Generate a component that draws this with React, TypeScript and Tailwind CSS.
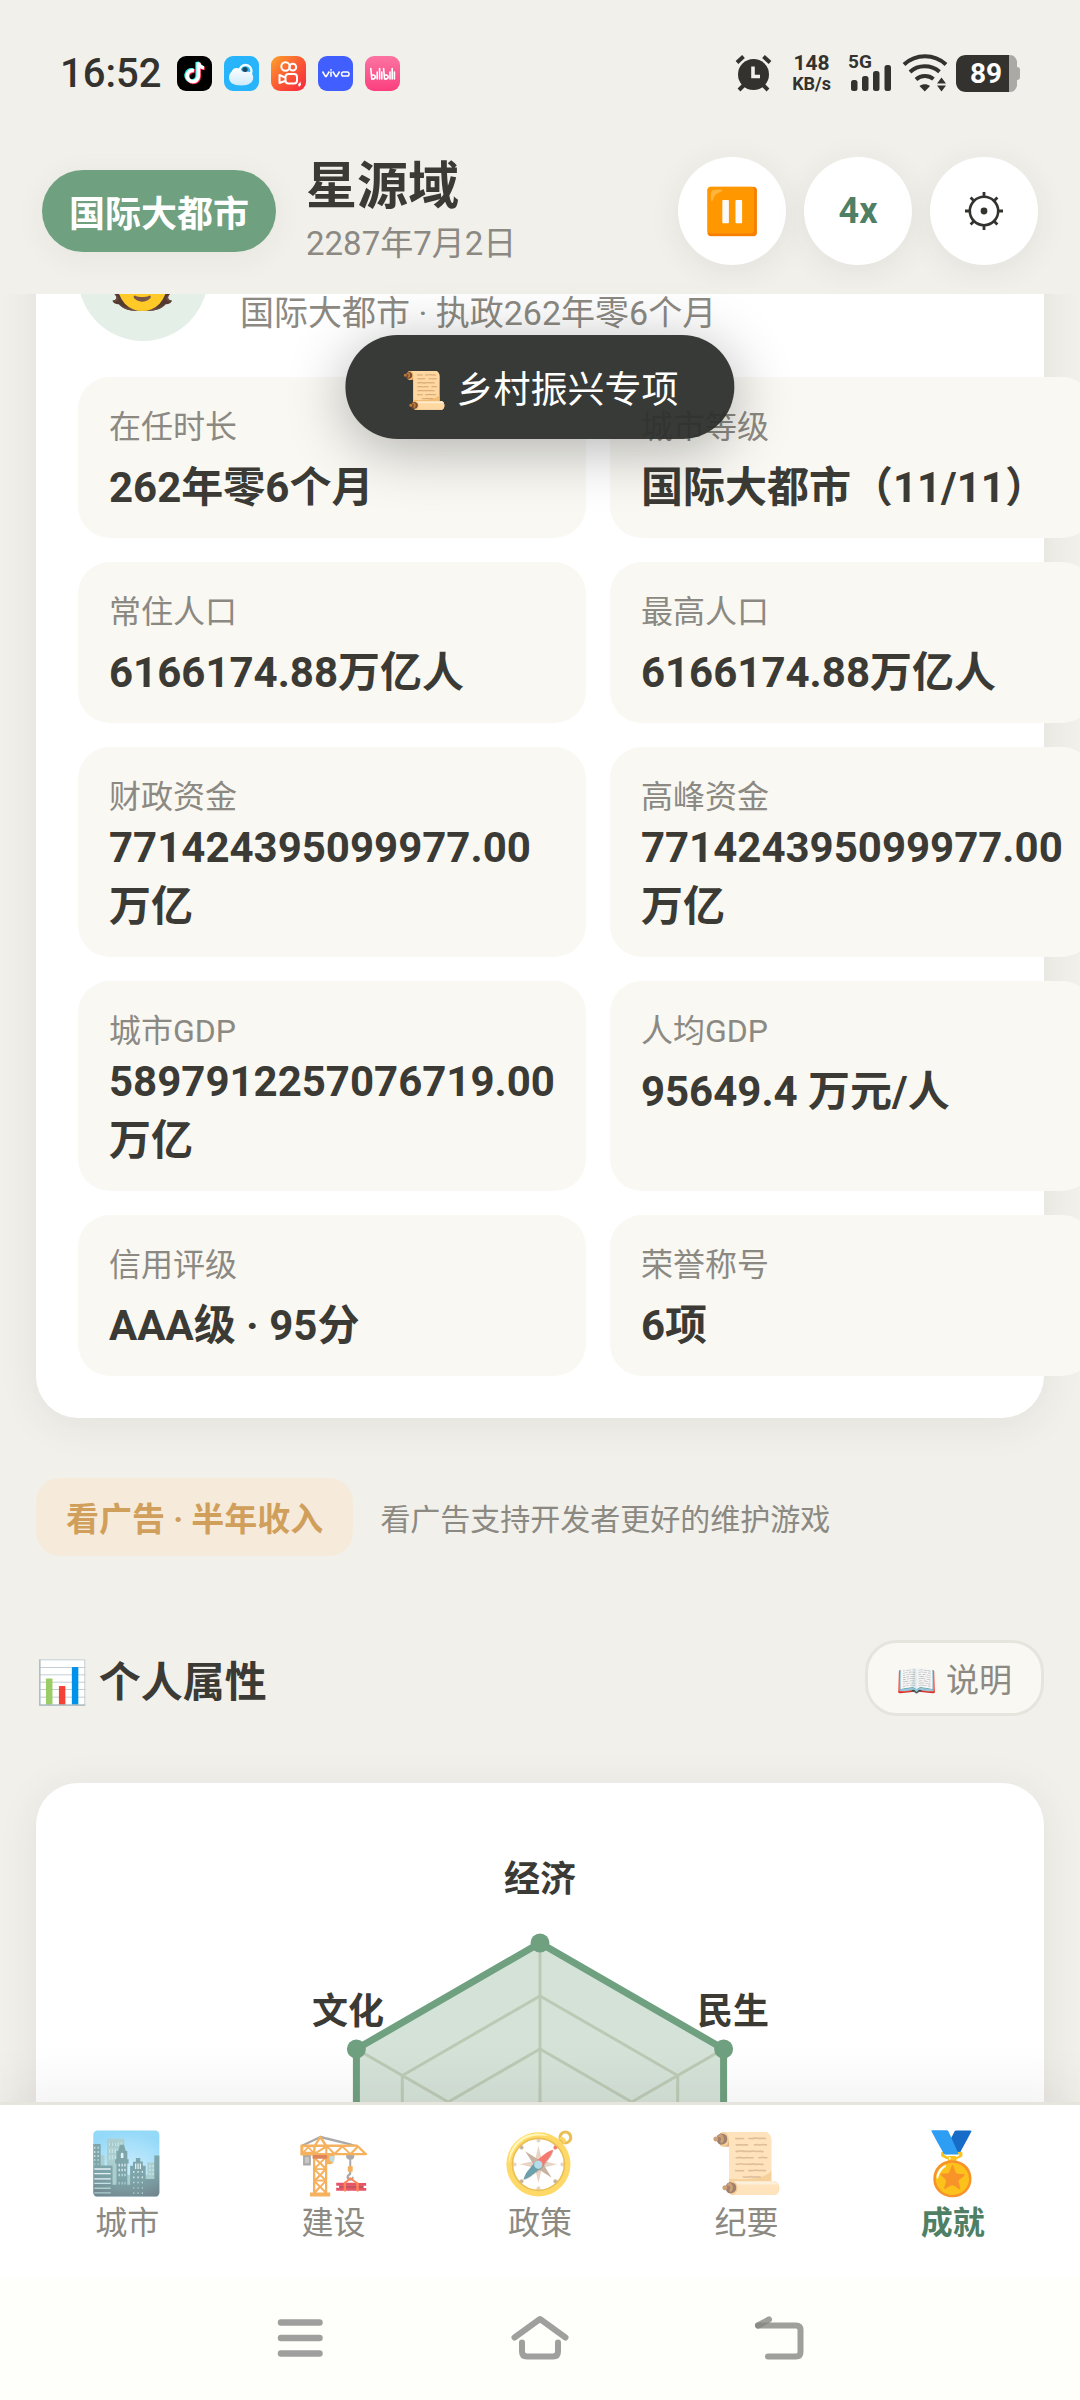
import React, { useLayoutEffect, useRef, useState } from 'react'

interface Stat {
  label: string
  value: string
}

const stats: Stat[] = [
  { label: '在任时长', value: '262年零6个月' },
  { label: '城市等级', value: '国际大都市（11/11）' },
  { label: '常住人口', value: '6166174.88万亿人' },
  { label: '最高人口', value: '6166174.88万亿人' },
  { label: '财政资金', value: '771424395099977.00万亿' },
  { label: '高峰资金', value: '771424395099977.00万亿' },
  { label: '城市GDP', value: '5897912257076719.00万亿' },
  { label: '人均GDP', value: '95649.4 万元/人' },
  { label: '信用评级', value: 'AAA级 · 95分' },
  { label: '荣誉称号', value: '6项' },
]

const tabs = [
  { id: 'city', icon: '🏙️', label: '城市' },
  { id: 'build', icon: '🏗️', label: '建设' },
  { id: 'policy', icon: '🧭', label: '政策' },
  { id: 'log', icon: '📜', label: '纪要' },
  { id: 'honor', icon: '🏅', label: '成就' },
]

// radar: centre and outer radius in viewBox units
const CENTER = 330
const RADIUS = 212

const hexPoints = (r: number) =>
  [0, 1, 2, 3, 4, 5].map((i) => {
    const a = (Math.PI / 3) * i - Math.PI / 2
    return [CENTER + r * Math.cos(a), CENTER + r * Math.sin(a)]
  })

const toPath = (pts: number[][]) => pts.map((p) => p.join(',')).join(' ')

const radarLabels = [
  { text: '经济', x: 330, y: 67 },
  { text: '文化', x: 138, y: 199 },
  { text: '民生', x: 523, y: 199 },
]

function AppIcons() {
  return (
    <div className="flex gap-3">
      <svg className="size-[35px]" viewBox="0 0 35 35">
        <rect width="35" height="35" rx="9" fill="#000" />
        <g fill="none" strokeWidth="3.6">
          <path d="M17 14.5a5.6 5.6 0 1 0 4.4 5.5V6.5c.6 3 2.6 4.9 5.6 5.2" stroke="#25f4ee" transform="translate(-1.2 -.6)" />
          <path d="M17 14.5a5.6 5.6 0 1 0 4.4 5.5V6.5c.6 3 2.6 4.9 5.6 5.2" stroke="#fe2c55" transform="translate(.8 .8)" />
          <path d="M17 14.5a5.6 5.6 0 1 0 4.4 5.5V6.5c.6 3 2.6 4.9 5.6 5.2" stroke="#fff" />
        </g>
      </svg>
      <svg className="size-[35px]" viewBox="0 0 35 35">
        <defs>
          <linearGradient id="cloud" x1="0" y1="0" x2="0" y2="1">
            <stop offset="0" stopColor="#fff" />
            <stop offset="1" stopColor="#cdeafb" />
          </linearGradient>
        </defs>
        <rect width="35" height="35" rx="9" fill="#27b4fa" />
        <circle cx="21.5" cy="15" r="6" fill="none" stroke="#f2fbff" strokeWidth="2.4" />
        <circle cx="21" cy="13.5" r="2.6" fill="#1e4a5e" />
        <path d="M12.5 12c2.600 0 4.600 1.200 5.600 3.200 1.400.8 3 1 4.500.6 3.900-.6 6.600 2.200 6.600 5.700 0 4.800-4 8-12 8S5 26.500 5 21.500c0-3 1.300-4.600 2.400-5.400.8-2.500 2.700-4.100 5.100-4.100z" fill="url(#cloud)" />
      </svg>
      <svg className="size-[35px]" viewBox="0 0 35 35">
        <defs>
          <linearGradient id="camera" x1="0" y1="0" x2="1" y2="1">
            <stop offset="0" stopColor="#fda32b" />
            <stop offset=".5" stopColor="#fb5a34" />
            <stop offset="1" stopColor="#f8263f" />
          </linearGradient>
        </defs>
        <rect width="35" height="35" rx="9" fill="url(#camera)" />
        <g fill="none" stroke="#fff" strokeWidth="2">
          <circle cx="14.5" cy="10.5" r="4.2" />
          <circle cx="21.8" cy="11.2" r="3.4" />
          <rect x="14.500" y="18" width="11.5" height="9.5" rx="3" />
          <path d="M14 21.500 8.500 19v8l5.500-2" strokeLinejoin="round" />
        </g>
        <path d="m29.500 25.500.5 3.500-2 2-1-2.500z" fill="#fff" />
      </svg>
      <svg className="size-[35px]" viewBox="0 0 35 35">
        <rect width="35" height="35" rx="9" fill="#415fff" />
        <g fill="none" stroke="#fff" strokeWidth="1.5">
          <path d="m4.500 15.500 3 5h.8l3-5M13 15.500v5.200M14.800 15.500l3 5h.8l3-5" />
          <rect x="23.600" y="15.900" width="7.4" height="4.2" rx="1.8" />
        </g>
        <rect x="12.200" y="13.200" width="1.6" height="1.4" fill="#fff" />
      </svg>
      <svg className="size-[35px]" viewBox="0 0 35 35">
        <defs>
          <linearGradient id="pink" x1="0" y1="0" x2="0" y2="1">
            <stop offset="0" stopColor="#fb74a1" />
            <stop offset="1" stopColor="#fb3f7e" />
          </linearGradient>
        </defs>
        <rect width="35" height="35" rx="9" fill="url(#pink)" />
        <g fill="none" stroke="#fff" strokeWidth="1.6" strokeLinecap="round">
          <path d="m5.800 12.500 1 10.500c4 .6 5.500-3.800.2-4.200M12.200 16v7M14.600 12.500v10.500M16.800 16v7" />
          <path d="m18.600 12.500 1 10.500c4 .6 5.500-3.800.2-4.200M25 16v7M27.200 12.500v10.500M29.400 16v7" />
        </g>
      </svg>
    </div>
  )
}

function StatusBar() {
  return (
    <div className="flex h-[54px] items-center justify-between px-[60px] text-[#33322e]">
      <div className="flex items-center gap-4">
        <span className="text-[40px] font-medium">16:52</span>
        <AppIcons />
      </div>
      <div className="flex items-center">
        <svg className="mr-5 h-[38px] w-[37px]" viewBox="0 0 37 38">
          <circle cx="18.5" cy="20.5" r="15.5" fill="currentColor" />
          <path d="m2 8.500 6.500-6M35 8.500l-6.500-6M4 36l5-5M33 36l-5-5" stroke="currentColor" strokeWidth="4" />
          <path d="M18 12.500v10h7" fill="none" stroke="#f1f0eb" strokeWidth="3.6" />
        </svg>
        <div className="mr-[17px] flex flex-col items-center font-bold">
          <span className="text-[21px] leading-[22px]">148</span>
          <span className="text-[18px] leading-[20px]">KB/s</span>
        </div>
        <div className="relative mr-[10px] h-[38px] w-[44px]">
          <span className="absolute top-0 left-0 text-[19px] leading-[16px] font-bold">5G</span>
          <svg className="size-full" viewBox="0 0 44 38" fill="currentColor">
            <rect x="3" y="26" width="6.5" height="11" rx="2.5" />
            <rect x="14" y="22" width="6.5" height="15" rx="2.5" />
            <rect x="25" y="17" width="6.5" height="20" rx="2.5" />
            <rect x="36.500" y="11" width="6.5" height="26" rx="2.5" />
          </svg>
        </div>
        <svg className="mr-2 h-[38px] w-[46px]" viewBox="0 0 46 38" fill="none">
          <path d="M2 10.500C14-.5 32-.5 44 10.500M8 18c8-7.500 21-7.500 29.500-.2M14 25.500c5-4.500 12.500-4.500 17.500-.5" stroke="currentColor" strokeWidth="4" />
          <path d="M17.500 32c3-2.500 7.500-2.500 10.500 0l-5.200 5.500z" fill="currentColor" />
          <path d="m39.500 23.500 4.500 6h-9zM39.500 37.500l4.500-6h-9z" fill="currentColor" />
        </svg>
        <div className="relative h-[37px] w-[64px]">
          <svg className="absolute inset-0 size-full" viewBox="0 0 64 37">
            <path d="M52 0h2c4 0 6 3 7 6v6c2 0 3 1 3 3v7c0 2-1 3-3 3v6c-1 3-3 6-7 6h-2z" fill="#aaa9a5" />
            <path d="M10 0h43v37H10C4 37 0 33 0 27V10C0 4 4 0 10 0z" fill="currentColor" />
          </svg>
          <span className="relative block w-[60px] text-center text-[28px] leading-[37px] font-bold text-white">89</span>
        </div>
      </div>
    </div>
  )
}

function Header() {
  return (
    <header className="relative z-10 bg-[#f1f0eb] pt-[46px]">
      <StatusBar />
      <div className="flex items-center justify-between px-[42px] pt-[57px] pb-[29px]">
        <div className="flex items-center gap-[30px]">
          <span className="rounded-full bg-[#6fa07f] px-[27px] py-[15px] text-[36px] font-bold text-white shadow-[0_6px_32px_rgba(60,57,50,0.06)]">
            国际大都市
          </span>
          <div>
            <h1 className="text-[51px] leading-[60px] font-bold">星源域</h1>
            <p className="text-[33px] text-[#8b8982]">2287年7月2日</p>
          </div>
        </div>
        <div className="flex gap-[18px]">
          <button aria-label="暂停" className="size-[108px] rounded-full bg-white text-[45px] shadow-[0_6px_32px_rgba(60,57,50,0.08)]">
            ⏸️
          </button>
          <button className="size-[108px] rounded-full bg-white text-[36px] font-bold text-[#4f7f65] shadow-[0_6px_32px_rgba(60,57,50,0.08)]">
            4x
          </button>
          <button
            aria-label="设置"
            className="flex size-[108px] items-center justify-center rounded-full bg-white text-[#33322e] shadow-[0_6px_32px_rgba(60,57,50,0.08)]"
          >
            <svg className="size-[38px]" viewBox="-19 -19 38 38" fill="none" stroke="currentColor">
              <circle r="14.2" strokeWidth="2.6" />
              <circle r="3.4" fill="currentColor" stroke="none" />
              <path
                d="M0-19v5M0 19v-5M-19 0h5M19 0h-5M-13.4-13.4l3.500 3.500M13.400 13.400l-3.500-3.500M-13.400 13.400l3.500-3.500M13.400-13.400l-3.500 3.500"
                strokeWidth="2.8"
              />
            </svg>
          </button>
        </div>
      </div>
    </header>
  )
}

function ProfileCard() {
  return (
    <section className="rounded-[42px] bg-white p-[42px] shadow-[0_6px_42px_rgba(60,57,50,0.08)]">
      <div className="mb-[36px] flex items-end gap-8">
        <div className="flex size-[130px] items-center justify-center rounded-full bg-[#e4efe7] text-[63px]">🧑</div>
        <p className="pb-[6px] text-[34px] text-[#8b8982]">国际大都市 · 执政262年零6个月</p>
      </div>
      {/* long numbers push the second column past the card */}
      <dl className="grid grid-cols-[1fr_1fr] gap-6">
        {stats.map((s) => (
          <div key={s.label} className="rounded-[32px] bg-[#f9f8f3] px-[31px] py-[24px]">
            <dt className="mb-[6px] text-[32px] text-[#8b8982]">{s.label}</dt>
            <dd className="text-[42px] font-bold">{s.value}</dd>
          </div>
        ))}
      </dl>
    </section>
  )
}

function Radar() {
  const outer = hexPoints(RADIUS)
  return (
    <svg className="mx-auto size-[660px]" viewBox="0 0 660 660">
      <g fill="none" stroke="#dddccd" strokeWidth="3">
        {[0.25, 0.5, 0.75, 1].map((k) => (
          <polygon key={k} points={toPath(hexPoints(RADIUS * k))} />
        ))}
        {outer.map(([x, y], i) => (
          <line key={i} x1={CENTER} y1={CENTER} x2={x} y2={y} />
        ))}
      </g>
      <polygon points={toPath(outer)} fill="#6fa07f" fillOpacity="0.3" stroke="#6fa07f" strokeWidth="7" />
      {outer.map(([x, y], i) => (
        <circle key={i} cx={x} cy={y} r="9.5" fill="#6fa07f" />
      ))}
      {radarLabels.map((l) => (
        <text key={l.text} x={l.x} y={l.y} textAnchor="middle" className="fill-[#3b3a34] text-[36px] font-bold">
          {l.text}
        </text>
      ))}
    </svg>
  )
}

function SystemNav() {
  return (
    <div className="relative z-10 flex h-[123px] justify-center gap-[170px] bg-[#fefefb] pt-[27px]">
      <button aria-label="最近任务" className="size-[70px]">
        <svg viewBox="0 0 70 70" stroke="#9f9f9d" strokeWidth="6.5" strokeLinecap="round">
          <path d="M16 18.500h38.500M16 34h38.500M16 49.500h38.500" />
        </svg>
      </button>
      <button aria-label="主屏幕" className="size-[70px]">
        <svg viewBox="0 0 70 70" fill="none" stroke="#9f9f9d" strokeWidth="6" strokeLinecap="round" strokeLinejoin="round">
          <path d="M9.500 33.500 35 15l25.500 18.500" />
          <path d="M17 38.500v9q0 5 5 5h26q5 0 5-5v-9" />
        </svg>
      </button>
      <button aria-label="返回" className="size-[70px]">
        <svg viewBox="0 0 70 70" fill="none" stroke="#848482" strokeOpacity="0.78" strokeWidth="6" strokeLinecap="round">
          <path d="M13 21.500h38q4.500 0 4.500 4.500v22q0 4.500-4.500 4.500H23" />
          <path d="m13 21.500 11-6" />
        </svg>
      </button>
    </div>
  )
}

export default function App() {
  const [tab, setTab] = useState('honor')
  const mainRef = useRef<HTMLElement>(null)

  useLayoutEffect(() => {
    if (mainRef.current) mainRef.current.scrollTop = 161
  }, [])

  return (
    <div className="relative flex h-screen flex-col overflow-hidden bg-[#f1f0eb] leading-[normal] text-[#3b3a34] font-['Roboto','Noto_Sans_CJK_SC','Noto_Color_Emoji',sans-serif]">
      <Header />

      <main ref={mainRef} className="min-h-0 flex-1 overflow-x-hidden overflow-y-auto px-[36px] py-[36px] [scrollbar-width:none]">
        <ProfileCard />

        <div className="mt-[60px] flex items-center gap-[27px]">
          <button className="rounded-[24px] bg-[#f6ebda] px-[30px] py-[15px] text-[33px] font-bold text-[#d09f5c]">
            看广告 · 半年收入
          </button>
          <span className="text-[30px] text-[#8b8982]">看广告支持开发者更好的维护游戏</span>
        </div>

        <div className="mt-[84px] flex items-center justify-between">
          <h2 className="text-[42px] font-bold">📊 个人属性</h2>
          <button className="rounded-[32px] border-[3px] border-[#e6e5dd] bg-[#f9f8f3] px-[29px] py-[11px] text-[33px] text-[#8b8982]">
            📖 说明
          </button>
        </div>

        <section className="mt-[67px] rounded-[42px] bg-white p-[42px] shadow-[0_6px_42px_rgba(60,57,50,0.08)]">
          <Radar />
        </section>
      </main>

      <nav className="relative z-10 flex border-t-[3px] border-[#e6e5dd] bg-white px-[24px] pt-[25px] pb-[34px] shadow-[0_-10px_52px_rgba(60,57,50,0.08)]">
        {tabs.map((t) => (
          <button key={t.id} onClick={() => setTab(t.id)} className="flex flex-1 flex-col items-center">
            <span className={t.id === tab ? 'text-[60px] leading-[67px]' : 'text-[60px] leading-[67px] opacity-70'}>{t.icon}</span>
            <span className={t.id === tab ? 'text-[32px] font-bold text-[#4f7f65]' : 'text-[32px] text-[#8b8982]'}>{t.label}</span>
          </button>
        ))}
      </nav>
      <SystemNav />

      <div
        role="status"
        className="absolute top-[335px] left-1/2 z-20 -translate-x-1/2 rounded-full bg-[#2d2f2c]/95 px-[56px] py-[25px] text-[37px] whitespace-nowrap text-white shadow-[0_10px_60px_rgba(0,0,0,0.3)]"
      >
        📜 乡村振兴专项
      </div>
    </div>
  )
}
